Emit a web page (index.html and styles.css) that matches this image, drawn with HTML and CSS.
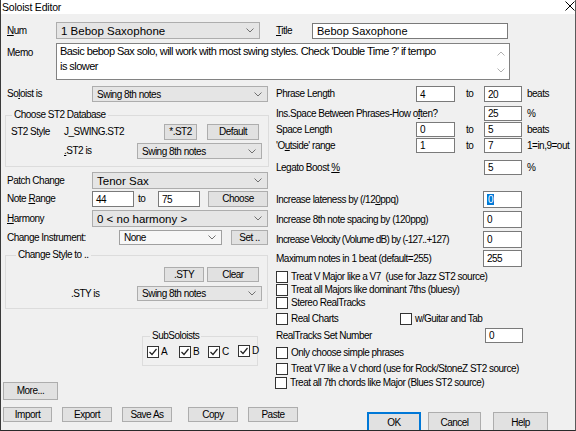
FILE: index.html
```html
<!DOCTYPE html>
<html>
<head>
<meta charset="utf-8">
<link rel="stylesheet" href="styles.css">
</head>
<body>
<div class="dialog">
  <div class="titlebar">
    <span class="title-text">Soloist Editor</span>
    <svg class="close" width="10" height="10" viewBox="0 0 10 10"><path d="M0.5 0.5L9.5 9.5M9.5 0.5L0.5 9.5" stroke="#000" stroke-width="1" fill="none"/></svg>
  </div>
  <div class="content">
    <div class="top-row">
      <span class="lbl num-lbl"><u>N</u>um</span>
      <div class="combo big num-combo"><span>1 Bebop Saxophone</span><svg class="arrow" width="8" height="5" viewBox="0 0 8 5"><polyline points="0.5,0.5 4,4 7.5,0.5" fill="none" stroke="#707070"/></svg></div>
      <span class="lbl title-lbl"><u>T</u>itle</span>
      <div class="field title-field">Bebop Saxophone</div>
    </div>
    <div class="memo-row">
      <span class="lbl memo-lbl">Memo</span>
      <div class="memo">
        <div class="memo-text"><span class="memo-line">Basic bebop Sax solo, will work with most swing styles. Check 'Double Time ?' if tempo</span><br><span class="memo-line">is slower</span></div>
        <div class="vscroll">
          <svg width="8" height="5" viewBox="0 0 8 5"><polyline points="0.5,4.5 4,1 7.5,4.5" fill="none" stroke="#b0b0b0"/></svg>
          <svg width="8" height="5" viewBox="0 0 8 5"><polyline points="0.5,0.5 4,4 7.5,0.5" fill="none" stroke="#b0b0b0"/></svg>
        </div>
      </div>
    </div>

    <div class="cols">
      <div class="left">
        <div class="lrow soloist-row">
          <span class="lbl lw85">So<u>l</u>oist is</span>
          <div class="combo w176 h16"><span>Swing 8th notes</span><svg class="arrow" width="8" height="5" viewBox="0 0 8 5"><polyline points="0.5,0.5 4,4 7.5,0.5" fill="none" stroke="#707070"/></svg></div>
        </div>

        <fieldset class="group st2-group">
          <legend>Choose ST2 Database</legend>
          <div class="grow st2-row1">
            <span class="lbl st2-lbl">ST2 Style</span>
            <span class="lbl st2-name">J_SWING.ST2</span>
            <div class="btn st2-btn">*.ST2</div>
            <div class="btn default-btn">Default</div>
          </div>
          <div class="grow st2-row2">
            <span class="lbl st2is-lbl"><u>.</u>ST2 is</span>
            <div class="combo w125 h16"><span>Swing 8th notes</span><svg class="arrow" width="8" height="5" viewBox="0 0 8 5"><polyline points="0.5,0.5 4,4 7.5,0.5" fill="none" stroke="#707070"/></svg></div>
          </div>
        </fieldset>

        <div class="lrow patch-row">
          <span class="lbl lw85">Patch Change</span>
          <div class="combo big w176 h17"><span>Tenor Sax</span><svg class="arrow" width="8" height="5" viewBox="0 0 8 5"><polyline points="0.5,0.5 4,4 7.5,0.5" fill="none" stroke="#707070"/></svg></div>
        </div>

        <div class="lrow range-row">
          <span class="lbl lw85">Note <u>R</u>ange</span>
          <div class="field w42 h16">44</div>
          <span class="lbl to-lbl">to</span>
          <div class="field w42 h16">75</div>
          <div class="btn choose-btn">Choose</div>
        </div>

        <div class="lrow harmony-row">
          <span class="lbl lw85"><u>H</u>armony</span>
          <div class="combo big w176 h17"><span>0 &lt; no harmony &gt;</span><svg class="arrow" width="8" height="5" viewBox="0 0 8 5"><polyline points="0.5,0.5 4,4 7.5,0.5" fill="none" stroke="#707070"/></svg></div>
        </div>

        <div class="lrow instr-row">
          <span class="lbl lw112">Change Instrument:</span>
          <div class="combo light w103 h15"><span>None</span><svg class="arrow" width="8" height="5" viewBox="0 0 8 5"><polyline points="0.5,0.5 4,4 7.5,0.5" fill="none" stroke="#707070"/></svg></div>
          <div class="btn set-btn">Set ..</div>
        </div>

        <fieldset class="group sty-group">
          <legend>Change Style to ..</legend>
          <div class="grow sty-row1">
            <div class="btn sty-btn">.STY</div>
            <div class="btn clear-btn">Clear</div>
          </div>
          <div class="grow sty-row2">
            <span class="lbl styis-lbl">.STY is</span>
            <div class="combo w125 h15"><span>Swing 8th notes</span><svg class="arrow" width="8" height="5" viewBox="0 0 8 5"><polyline points="0.5,0.5 4,4 7.5,0.5" fill="none" stroke="#707070"/></svg></div>
          </div>
        </fieldset>

        <fieldset class="group sub-group">
          <legend>SubSoloists</legend>
          <div class="sub-row">
            <span class="sub-item w32"><span class="cb checked"><svg width="10" height="10" viewBox="0 0 10 10"><polyline points="1.5,5 4,7.5 8.5,2" fill="none" stroke="#222" stroke-width="1.2"/></svg></span><span class="lbl">A</span></span>
            <span class="sub-item w29"><span class="cb checked"><svg width="10" height="10" viewBox="0 0 10 10"><polyline points="1.5,5 4,7.5 8.5,2" fill="none" stroke="#222" stroke-width="1.2"/></svg></span><span class="lbl">B</span></span>
            <span class="sub-item w30"><span class="cb checked"><svg width="10" height="10" viewBox="0 0 10 10"><polyline points="1.5,5 4,7.5 8.5,2" fill="none" stroke="#222" stroke-width="1.2"/></svg></span><span class="lbl">C</span></span>
            <span class="sub-item d-item"><span class="cb checked"><svg width="10" height="10" viewBox="0 0 10 10"><polyline points="1.5,5 4,7.5 8.5,2" fill="none" stroke="#222" stroke-width="1.2"/></svg></span><span class="lbl">D</span></span>
          </div>
        </fieldset>

        <div class="btn more-btn">More...</div>
      </div>

      <div class="right">
        <div class="rrow r1">
          <span class="lbl rw140">Phrase Length</span>
          <div class="field w39">4</div>
          <span class="lbl rto">to</span>
          <div class="field w38">20</div>
          <span class="lbl unit">beats</span>
        </div>
        <div class="rrow r2">
          <span class="lbl rw208">Ins.Space Between Phrases-How o<u>f</u>ten?</span>
          <div class="field w38">25</div>
          <span class="lbl unit">%</span>
        </div>
        <div class="rrow r3">
          <span class="lbl rw140">Space Length</span>
          <div class="field w39">0</div>
          <span class="lbl rto">to</span>
          <div class="field w38">5</div>
          <span class="lbl unit">beats</span>
        </div>
        <div class="rrow r4">
          <span class="lbl rw140">'O<u>u</u>tside' range</span>
          <div class="field w39">1</div>
          <span class="lbl rto">to</span>
          <div class="field w38">7</div>
          <span class="lbl unit">1=in,9=out</span>
        </div>
        <div class="rrow r5">
          <span class="lbl rw208">Legato Boost <u>%</u></span>
          <div class="field w38">5</div>
          <span class="lbl unit">%</span>
        </div>
        <div class="rrow r6">
          <span class="lbl rw207">Increase lateness by (/12<u>0</u>ppq)</span>
          <div class="field w39"><span class="sel">0</span></div>
        </div>
        <div class="rrow r7">
          <span class="lbl rw207">Increase 8th note spacing by (120pp<u>g</u>)</span>
          <div class="field w39">0</div>
        </div>
        <div class="rrow r8">
          <span class="lbl rw207 tight">Increase Velocity (Volume dB) by (-127..+127)</span>
          <div class="field w39">0</div>
        </div>
        <div class="rrow r9">
          <span class="lbl rw207">Maximum notes in 1 beat (default=255)</span>
          <div class="field w39">255</div>
        </div>
        <div class="crow c1"><span class="cb"></span><span class="lbl">Treat V Major like a V7&nbsp; (use for Jazz ST2 source)</span></div>
        <div class="crow c2"><span class="cb"></span><span class="lbl">Treat all Majors like dominant 7ths (bluesy)</span></div>
        <div class="crow c3"><span class="cb"></span><span class="lbl">Stereo RealTracks</span></div>
        <div class="crow c4"><span class="cb"></span><span class="lbl rc-lbl">Real Charts</span><span class="cb"></span><span class="lbl">w/Guitar and Tab</span></div>
        <div class="rrow r10">
          <span class="lbl rw209">RealTracks Set Number</span>
          <div class="field w38">0</div>
        </div>
        <div class="crow c5"><span class="cb"></span><span class="lbl">Only choose simple phrases</span></div>
        <div class="crow c6"><span class="cb"></span><span class="lbl">Treat V7 like a V chord (use for Rock/StoneZ ST2 source)</span></div>
        <div class="crow c7"><span class="cb"></span><span class="lbl">Treat all 7th chords like Major (Blues ST2 source)</span></div>
      </div>
    </div>

    <div class="bottom">
      <div class="bottom-left">
        <div class="btn b-import">Import</div>
        <div class="btn b-export">Export</div>
        <div class="btn b-saveas">Save As</div>
        <div class="btn b-copy">Copy</div>
        <div class="btn b-paste">Paste</div>
      </div>
      <div class="bottom-right">
        <div class="btn b-ok">OK</div>
        <div class="btn b-cancel">Cancel</div>
        <div class="btn b-help">Help</div>
      </div>
    </div>
  </div>
</div>
</body>
</html>
```

FILE: styles.css
```css
* { box-sizing: border-box; }
html, body { margin: 0; padding: 0; }
body {
  width: 576px; height: 431px; overflow: hidden;
  background: #f0f0f0;
  font-family: "Liberation Sans", Arial, sans-serif;
  font-size: 10px; letter-spacing: -0.5px; color: #000;
}
.dialog {
  width: 576px; height: 431px;
  background: #f0f0f0;
  border-left: 1px solid #3a3a3a;
  border-right: 1px solid #5a5a5a;
  border-bottom: 1px solid #2a2a2a;
  display: flex; flex-direction: column;
  overflow: hidden;
}
.titlebar {
  height: 14px; flex: none;
  background: #fff;
  display: flex; justify-content: space-between; align-items: center;
  padding: 0 0 0 1px;
}
.title-text { font-size: 10.5px; letter-spacing: -0.2px; line-height: 13px; }
.close { margin-right: 0; margin-top: -2px; }
.content { flex: 1; overflow: hidden; display: flex; flex-direction: column; }

.lbl { white-space: nowrap; line-height: 12px; flex: none; }
.tight { letter-spacing: -0.7px; }
u { text-decoration: underline; text-underline-offset: 1px; }
.big { font-size: 11.5px; letter-spacing: 0; }

/* controls */
.combo {
  display: flex; align-items: center; justify-content: space-between;
  background: #e5e5e5; border: 1px solid #adadad;
  padding: 0 5px 0 4px; flex: none; white-space: nowrap;
}
.combo.light { background: #f7f7f7; border-color: #a0a0a0; }
.arrow { flex: none; }
.field {
  background: #fff; border: 1px solid #7a7a7a;
  display: flex; align-items: center; padding: 0 3px; flex: none;
  height: 15px; white-space: nowrap;
}
.btn {
  background: #e1e1e1; border: 1px solid #adadad;
  display: flex; align-items: center; justify-content: center;
  flex: none; white-space: nowrap; height: 16px; line-height: 12px;
}
.cb {
  width: 12px; height: 12px; background: #fff; border: 1px solid #333;
  flex: none; display: inline-flex; align-items: center; justify-content: center;
}
.sel { background: #0078d7; color: #fff; padding: 0 1px; line-height: 11px; }

.w176 { width: 176px; } .w125 { width: 125px; } .w103 { width: 103px; }
.w42 { width: 42px; } .w39 { width: 39px; } .w38 { width: 38px; }
.h15 { height: 15px; } .h16 { height: 16px; } .h17 { height: 17px; }

/* top rows */
.top-row { display: flex; align-items: center; height: 17px; margin-top: 8px; padding-left: 6px; }
.num-lbl { width: 49px; }
.num-combo { width: 204px; height: 17px; }
.title-lbl { width: 36px; margin-left: 16px; }
.title-field { width: 196px; height: 16px; margin-top: 1px; padding-left: 4px; font-size: 11px; letter-spacing: 0; }
.memo-row { display: flex; height: 37px; margin-top: 4px; padding-left: 6px; }
.memo-lbl { width: 49px; padding-top: 4px; }
.memo { width: 454px; height: 37px; background: #fff; border: 1px solid #828282; display: flex; }
.memo-text { flex: 1; min-width: 0; padding: 0 0 0 3px; line-height: 14px; white-space: nowrap; overflow: hidden; }
.memo-line { font-size: 11px; letter-spacing: -0.55px; }
.vscroll { width: 17px; flex: none; display: flex; flex-direction: column; justify-content: space-between; align-items: center; padding: 7px 0 6px 0; }

/* columns */
.cols { display: flex; margin-top: 6px; height: 314px; flex: none; }
.left { width: 269px; flex: none; display: flex; flex-direction: column; align-items: flex-start; }
.right { flex: 1; padding-left: 6px; display: flex; flex-direction: column; align-items: flex-start; }

.lrow { display: flex; align-items: center; padding-left: 6px; }
.lw85 { width: 85px; }
.lw112 { width: 112px; }
.soloist-row { height: 16px; }

.group { border: 1px solid #dcdcdc; margin: 0; padding: 0; min-width: 0; }
.group legend { padding: 0 2px; margin-left: 6px; line-height: 12px; }
.st2-group { width: 264px; margin: 7px 0 0 4px; padding-bottom: 7px; }
.grow { display: flex; align-items: center; }
.st2-row1 { margin-top: 3px; height: 16px; padding-left: 5px; }
.st2-lbl { width: 53px; }
.st2-name { width: 100px; }
.st2-btn { width: 33px; }
.default-btn { width: 52px; margin-left: 10px; }
.st2-row2 { margin-top: 3px; height: 16px; }
.st2is-lbl { margin-left: 58px; width: 73px; }

.patch-row { height: 17px; margin-top: 5px; }
.range-row { height: 16px; margin-top: 2px; }
.to-lbl { width: 20px; margin-left: 4px; }
.choose-btn { width: 60px; margin-left: 8px; height: 16px; }
.harmony-row { height: 17px; margin-top: 3px; }
.instr-row { height: 15px; margin-top: 3px; }
.set-btn { width: 37px; margin-left: 9px; height: 15px; }

.sty-group { width: 263px; margin: 4px 0 0 4px; padding-bottom: 7px; }
.sty-group legend { margin-left: 10px; }
.sty-row1 { margin-top: 6px; height: 15px; }
.sty-btn { width: 40px; margin-left: 158px; height: 15px; }
.clear-btn { width: 52px; margin-left: 3px; height: 15px; }
.sty-row2 { margin-top: 4px; height: 15px; }
.styis-lbl { margin-left: 65px; width: 66px; }

.sub-group { width: 116px; margin: 21px 0 0 141px; padding: 0 0 7px 4px; }
.sub-group legend { margin-left: 3px; }
.sub-row { display: flex; align-items: center; margin-top: 4px; height: 12px; }
.sub-item { display: flex; align-items: center; gap: 2px; flex: none; }
.sub-item.w32 { width: 32px; } .sub-item.w29 { width: 29px; } .sub-item.w30 { width: 30px; }
.d-item { margin-top: -3px; }
.sub-item .cb { width: 12px; height: 12px; }

.more-btn { width: 55px; height: 18px; margin: 16px 0 0 2px; }

/* right column */
.rrow { display: flex; align-items: center; }
.rw140 { width: 140px; }
.rw207 { width: 207px; }
.rw208 { width: 208px; }
.rw209 { width: 209px; }
.rto { width: 29px; padding-left: 11px; }
.unit { margin-left: 5px; }
.r1 { height: 16px; } .r1 .field { height: 16px; }
.r2 { height: 15px; margin-top: 4px; }
.r3 { height: 15px; margin-top: 1px; }
.r4 { height: 15px; margin-top: 1px; }
.r5 { height: 15px; margin-top: 7px; }
.r6 { height: 17px; margin-top: 16px; }
.r7 { height: 17px; margin-top: 3px; }
.r8 { height: 17px; margin-top: 3px; }
.r9 { height: 17px; margin-top: 2px; }
.r6 .field, .r7 .field, .r8 .field, .r9 .field { height: 17px; }
.crow { display: flex; align-items: center; height: 13px; gap: 3px; }
.c1 { margin-top: 3px; }
.c4 { margin-top: 3px; }
.rc-lbl { width: 106px; }
.r10 { height: 15px; margin-top: 3px; }
.r10 .lbl { width: 209px; }
.c5 { margin-top: 3px; }
.c6 { margin-top: 3px; }
.c7 { margin-top: 1px; margin-left: -1px; }

/* bottom */
.bottom { display: flex; margin-top: 7px; padding-left: 2px; flex: none; }
.bottom-left { display: flex; height: 15px; }
.bottom-left .btn { height: 15px; }
.b-import { width: 49px; }
.b-export { width: 50px; margin-left: 10px; }
.b-saveas { width: 50px; margin-left: 10px; }
.b-copy { width: 50px; margin-left: 16px; }
.b-paste { width: 50px; margin-left: 10px; }
.bottom-right { display: flex; margin-left: 69px; margin-top: 5px; }
.bottom-right .btn { height: 21px; }
.b-ok { width: 54px; border: 1px solid #0078d7; box-shadow: inset 0 0 0 1px #0078d7; }
.b-cancel { width: 53px; margin-left: 7px; }
.b-help { width: 55px; margin-left: 12px; }
```
